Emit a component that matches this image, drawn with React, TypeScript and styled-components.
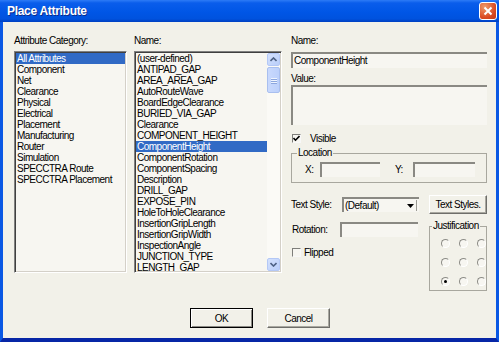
import React from 'react';
import styled, { createGlobalStyle } from 'styled-components';

const Beige = '#F2F1E9';
const FieldBg = '#F7F6F1';
const Highlight = '#316AC5';
const FrameBlue = '#0A58E4';

const GlobalStyle = createGlobalStyle`
  html, body {
    margin: 0;
    padding: 0;
    background: ${Beige};
  }
  body {
    width: 499px;
    height: 342px;
    overflow: hidden;
  }
`;

const Window = styled.div`
  width: 499px;
  height: 342px;
  display: flex;
  flex-direction: column;
  font-family: "Liberation Sans", Arial, sans-serif;
  font-size: 10px;
  letter-spacing: -0.5px;
  color: #000;
`;

const TitleBar = styled.div`
  height: 22px;
  flex: none;
  display: flex;
  align-items: center;
  justify-content: space-between;
  padding: 0 2px 0 7px;
  background: linear-gradient(#2D7BF6 0, #0A5DEB 3px, #0056E6 55%, #0052DE 85%, #0040C2 100%);
`;

const Title = styled.span`
  color: #fff;
  font-weight: bold;
  font-size: 12px;
  letter-spacing: -0.3px;
  text-shadow: 1px 1px #0B2C8C;
`;

const CloseButton = styled.div`
  width: 18px;
  height: 18px;
  box-sizing: border-box;
  border: 1px solid #fff;
  border-radius: 3px;
  background: radial-gradient(circle at 30% 25%, #F09A6A, #DA4A22 65%, #C23A16);
  display: flex;
  align-items: center;
  justify-content: center;
`;

const Body = styled.div`
  flex: 1;
  display: flex;
  flex-direction: column;
  background: ${Beige};
  border-left: 3px solid ${FrameBlue};
  border-right: 3px solid ${FrameBlue};
  border-bottom: 4px solid #0726A6;
  padding: 13px 9px 0 11px;
`;

const Columns = styled.div`
  height: 260px;
  display: flex;
  align-items: flex-start;
`;

const Column = styled.div<{ $width: number; $gap?: number }>`
  width: ${({ $width }) => $width}px;
  margin-left: ${({ $gap }) => $gap ?? 0}px;
  display: flex;
  flex-direction: column;
`;

const Label = styled.div<{ $top?: number }>`
  line-height: 12px;
  height: 12px;
  white-space: nowrap;
  margin-top: ${({ $top }) => $top ?? 0}px;
`;

const ListBox = styled.div`
  margin-top: 4px;
  height: 222px;
  box-sizing: border-box;
  display: flex;
  padding: 1px;
  background: ${FieldBg};
  border: 1px solid;
  border-color: #808080 #fff #fff #808080;
  box-shadow: inset 1px 1px 0 #404040, inset -1px -1px 0 #D4D0C8;
  overflow: hidden;
`;

const Items = styled.div`
  flex: 1;
  overflow: hidden;
`;

const Item = styled.div<{ $selected?: boolean }>`
  height: 11px;
  line-height: 11px;
  padding-left: 1px;
  white-space: nowrap;
  background: ${({ $selected }) => ($selected ? Highlight : 'transparent')};
  color: ${({ $selected }) => ($selected ? '#fff' : '#000')};
`;

const ScrollBar = styled.div`
  width: 13px;
  display: flex;
  flex-direction: column;
  background: #FBFAF6;
`;

const ScrollButton = styled.div`
  height: 13px;
  box-sizing: border-box;
  border: 1px solid #B4C8F6;
  border-radius: 2px;
  background: linear-gradient(135deg, #D4E1FD, #B9CEFA);
  display: flex;
  align-items: center;
  justify-content: center;
`;

const Track = styled.div`
  flex: 1;
  display: flex;
  flex-direction: column;
`;

const Thumb = styled.div`
  margin-top: 1px;
  height: 26px;
  box-sizing: border-box;
  border: 1px solid #A9BFEF;
  border-radius: 2px;
  background: linear-gradient(90deg, #C9D9FD, #BCD0FB);
  display: flex;
  flex-direction: column;
  align-items: center;
  justify-content: center;
  gap: 1px;
`;

const Grip = styled.div`
  width: 6px;
  height: 1px;
  background: #EEF4FE;
  box-shadow: 0 1px 0 #8CA6DE;
`;

const Sunken = styled.div<{ $width?: number; $height: number }>`
  ${({ $width }) => ($width ? `width: ${$width}px;` : '')}
  height: ${({ $height }) => $height}px;
  box-sizing: border-box;
  background: ${FieldBg};
  border-style: solid;
  border-width: 2px 0 0 2px;
  border-color: #8A8983;
  line-height: ${({ $height }) => $height - 2}px;
  padding-left: 1px;
  white-space: nowrap;
  overflow: hidden;
`;

const TextField = styled(Sunken)<{ $top?: number }>`
  margin-top: ${({ $top }) => $top ?? 0}px;
`;

const CheckRow = styled.div<{ $top: number; $gap: number; $indent?: number }>`
  display: flex;
  align-items: center;
  height: 10px;
  margin-top: ${({ $top }) => $top}px;
  padding-left: ${({ $indent }) => $indent ?? 1}px;
  gap: ${({ $gap }) => $gap}px;
`;

const CheckBox = styled.div`
  width: 9px;
  height: 9px;
  box-sizing: border-box;
  border: 1px solid;
  border-color: #7E7E7A #F8F8F8 #F8F8F8 #7E7E7A;
  background: ${FieldBg};
  display: flex;
  align-items: center;
  justify-content: center;
`;

const Group = styled.div<{ $top: number; $height: number; $padding: string }>`
  position: relative;
  margin-top: ${({ $top }) => $top}px;
  height: ${({ $height }) => $height}px;
  box-sizing: border-box;
  border: 1px solid #A8A79E;
  padding: ${({ $padding }) => $padding};
`;

const Legend = styled.span<{ $left: number }>`
  position: absolute;
  top: -7px;
  left: ${({ $left }) => $left}px;
  padding: 0 1px;
  line-height: 12px;
  background: ${Beige};
  white-space: nowrap;
`;

const LocationRow = styled.div`
  display: flex;
  align-items: center;
`;

const InlineLabel = styled.span<{ $width: number; $left?: number }>`
  width: ${({ $width }) => $width}px;
  margin-left: ${({ $left }) => $left ?? 0}px;
  flex: none;
  white-space: nowrap;
`;

const StyleGrid = styled.div`
  margin-top: 12px;
  display: grid;
  grid-template-columns: 128px 58px;
  column-gap: 10px;
  row-gap: 8px;
`;

const FieldRow = styled.div<{ $top?: number; $indent?: number }>`
  display: flex;
  align-items: center;
  margin-top: ${({ $top }) => $top ?? 0}px;
  padding-left: ${({ $indent }) => $indent ?? 0}px;
`;

const Combo = styled(Sunken)`
  display: flex;
  align-items: center;
  justify-content: space-between;
  padding-right: 2px;
`;

const DropButton = styled.div`
  width: 12px;
  height: 11px;
  display: flex;
  align-items: center;
  justify-content: center;
  border-right: 1px solid #9C9B94;
`;

const Button = styled.div<{ $width: number; $height: number; $default?: boolean }>`
  width: ${({ $width }) => $width}px;
  height: ${({ $height }) => $height}px;
  box-sizing: border-box;
  display: flex;
  align-items: center;
  justify-content: center;
  white-space: nowrap;
  background: ${Beige};
  border: 1px solid;
  border-color: ${({ $default }) => ($default ? '#000' : '#FFFFFF #6E6E6A #6E6E6A #FFFFFF')};
  box-shadow: ${({ $default }) =>
    $default
      ? 'inset 1px 1px 0 #fff, inset -1px -1px 0 #8A8983'
      : 'inset -1px -1px 0 #A9A8A0'};
`;

const RadioGrid = styled.div`
  display: grid;
  grid-template-columns: repeat(3, 9px);
  grid-auto-rows: 9px;
  column-gap: 9px;
  row-gap: 10px;
`;

const Radio = styled.div<{ $checked?: boolean }>`
  width: 9px;
  height: 9px;
  box-sizing: border-box;
  border-radius: 50%;
  border: 1px solid;
  border-color: #8C8C86 #FFFFFF #FFFFFF #8C8C86;
  background: ${FieldBg};
  display: flex;
  align-items: center;
  justify-content: center;
  &::after {
    content: '';
    width: 3px;
    height: 3px;
    border-radius: 50%;
    background: ${({ $checked }) => ($checked ? '#000' : 'transparent')};
  }
`;

const ButtonRow = styled.div`
  margin-top: 13px;
  display: flex;
  gap: 14px;
  padding-left: 176px;
`;

const categories = [
  'All Attributes',
  'Component',
  'Net',
  'Clearance',
  'Physical',
  'Electrical',
  'Placement',
  'Manufacturing',
  'Router',
  'Simulation',
  'SPECCTRA Route',
  'SPECCTRA Placement',
];

const names = [
  '(user-defined)',
  'ANTIPAD_GAP',
  'AREA_AREA_GAP',
  'AutoRouteWave',
  'BoardEdgeClearance',
  'BURIED_VIA_GAP',
  'Clearance',
  'COMPONENT_HEIGHT',
  'ComponentHeight',
  'ComponentRotation',
  'ComponentSpacing',
  'Description',
  'DRILL_GAP',
  'EXPOSE_PIN',
  'HoleToHoleClearance',
  'InsertionGripLength',
  'InsertionGripWidth',
  'InspectionAngle',
  'JUNCTION_TYPE',
  'LENGTH_GAP',
];

const Chevron = ({ up }: { up?: boolean }) => (
  <svg width="7" height="5" viewBox="0 0 7 5">
    <polyline
      points={up ? '0.5,4 3.5,1 6.5,4' : '0.5,1 3.5,4 6.5,1'}
      fill="none"
      stroke="#4D6185"
      strokeWidth="1.6"
    />
  </svg>
);

const Check = () => (
  <svg width="7" height="7" viewBox="0 0 7 7">
    <polyline points="0.5,3 2.5,5.2 6.5,1" fill="none" stroke="#000" strokeWidth="1.6" />
  </svg>
);

function App() {
  return (
    <Window>
      <GlobalStyle />
      <TitleBar>
        <Title>Place Attribute</Title>
        <CloseButton>
          <svg width="10" height="10" viewBox="0 0 10 10">
            <path d="M1.5 1.5 L8.5 8.5 M8.5 1.5 L1.5 8.5" stroke="#fff" strokeWidth="2" />
          </svg>
        </CloseButton>
      </TitleBar>
      <Body>
        <Columns>
          <Column $width={113}>
            <Label>Attribute Category:</Label>
            <ListBox>
              <Items>
                {categories.map((c, i) => (
                  <Item key={c} $selected={i === 0}>{c}</Item>
                ))}
              </Items>
            </ListBox>
          </Column>

          <Column $width={148} $gap={7}>
            <Label>Name:</Label>
            <ListBox>
              <Items>
                {names.map((n) => (
                  <Item key={n} $selected={n === 'ComponentHeight'}>{n}</Item>
                ))}
              </Items>
              <ScrollBar>
                <ScrollButton><Chevron up /></ScrollButton>
                <Track>
                  <Thumb>
                    <Grip />
                    <Grip />
                    <Grip />
                  </Thumb>
                </Track>
                <ScrollButton><Chevron /></ScrollButton>
              </ScrollBar>
            </ListBox>
          </Column>

          <Column $width={196} $gap={9}>
            <Label>Name:</Label>
            <TextField $height={16} $top={5}>ComponentHeight</TextField>
            <Label $top={5}>Value:</Label>
            <TextField $height={40} />
            <CheckRow $top={8} $gap={9}>
              <CheckBox><Check /></CheckBox>
              <span>Visible</span>
            </CheckRow>

            <Group $top={10} $height={30} $padding="8px 0 0 13px">
              <Legend $left={5}>Location</Legend>
              <LocationRow>
                <InlineLabel $width={15}>X:</InlineLabel>
                <Sunken $width={60} $height={15} />
                <InlineLabel $width={18} $left={15}>Y:</InlineLabel>
                <Sunken $width={62} $height={15} />
              </LocationRow>
            </Group>

            <StyleGrid>
              <FieldRow>
                <InlineLabel $width={51}>Text Style:</InlineLabel>
                <Combo $width={77} $height={15}>
                  <span>(Default)</span>
                  <DropButton>
                    <svg width="7" height="4" viewBox="0 0 7 4">
                      <path d="M0 0 H7 L3.5 4 Z" fill="#000" />
                    </svg>
                  </DropButton>
                </Combo>
              </FieldRow>
              <Button $width={58} $height={19}>Text Styles.</Button>

              <div>
                <FieldRow $indent={1}>
                  <InlineLabel $width={48}>Rotation:</InlineLabel>
                  <Sunken $width={78} $height={15} />
                </FieldRow>
                <CheckRow $top={10} $gap={3}>
                  <CheckBox />
                  <span>Flipped</span>
                </CheckRow>
              </div>
              <Group $top={4} $height={65} $padding="12px 0 0 11px">
                <Legend $left={2}>Justification</Legend>
                <RadioGrid>
                  {Array.from({ length: 9 }, (_, i) => (
                    <Radio key={i} $checked={i === 6} />
                  ))}
                </RadioGrid>
              </Group>
            </StyleGrid>
          </Column>
        </Columns>

        <ButtonRow>
          <Button $width={63} $height={20} $default>OK</Button>
          <Button $width={63} $height={20}>Cancel</Button>
        </ButtonRow>
      </Body>
    </Window>
  );
}

export default App;
